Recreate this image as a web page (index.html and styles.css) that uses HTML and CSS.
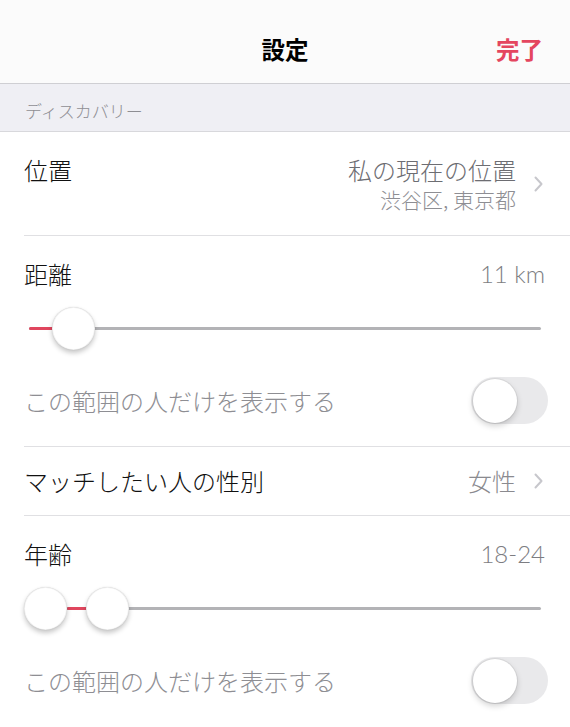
FILE: index.html
```html
<!doctype html>
<html>
<head>
<meta charset="utf-8">
<title>設定</title>
<link rel="stylesheet" href="styles.css">
</head>
<body>
	<header class="navbar">
		<span></span>
		<span class="nav-title">設定</span>
		<span class="nav-done">完了</span>
	</header>

	<div class="section-head">ディスカバリー</div>

	<ul class="list">
		<li class="row row-location">
			<span class="label">位置</span>
			<div class="value-block">
				<div class="value-main">私の現在の位置</div>
				<div class="value-sub">渋谷区, 東京都</div>
			</div>
			<svg class="chevron" width="9" height="16" viewBox="0 0 9 16"><polyline points="1.5,1.5 7.5,8 1.5,14.5" fill="none" stroke="#c7c7cc" stroke-width="2" stroke-linecap="round" stroke-linejoin="round"/></svg>
		</li>

		<li class="row row-range">
			<div class="range-top">
				<span class="label">距離</span>
				<span class="value num">11 km</span>
			</div>
			<div class="slider">
				<div class="track"></div>
				<div class="fill" style="left:0px;width:24px"></div>
				<div class="thumb" style="left:23px"></div>
			</div>
			<div class="switch-line">
				<span class="label-muted">この範囲の人だけを表示する</span>
				<span class="switch"><span class="knob"></span></span>
			</div>
		</li>

		<li class="row row-simple">
			<span class="label">マッチしたい人の性別</span>
			<span class="value">女性</span>
			<svg class="chevron" width="9" height="16" viewBox="0 0 9 16"><polyline points="1.5,1.5 7.5,8 1.5,14.5" fill="none" stroke="#c7c7cc" stroke-width="2" stroke-linecap="round" stroke-linejoin="round"/></svg>
		</li>

		<li class="row row-range">
			<div class="range-top">
				<span class="label">年齢</span>
				<span class="value num">18-24</span>
			</div>
			<div class="slider">
				<div class="track"></div>
				<div class="fill" style="left:38px;width:20px"></div>
				<div class="thumb" style="left:-5px"></div>
				<div class="thumb" style="left:57px"></div>
			</div>
			<div class="switch-line">
				<span class="label-muted">この範囲の人だけを表示する</span>
				<span class="switch"><span class="knob"></span></span>
			</div>
		</li>
	</ul>
</body>
</html>
```

FILE: styles.css
```css
body,*{
	padding:0px;
	margin:0px;
	box-sizing:border-box;
}

body{
	background:#fff;
	font-family:"Noto Sans CJK JP","Noto Sans",sans-serif;
	font-weight:300;
	color:#1c1c1e;
	overflow:hidden;
}

.navbar{
	height:84px;
	padding-top:15px;
	display:grid;
	grid-template-columns:1fr auto 1fr;
	align-items:center;
	background:#fbfbfb;
	border-bottom:1px solid #cfcfd3;
}

.nav-title{
	font-size:23.5px;
	font-weight:700;
	color:#000;
}

.nav-done{
	justify-self:end;
	padding-right:27px;
	font-size:23.5px;
	font-weight:700;
	color:#e4465f;
}

.section-head{
	height:48px;
	padding:16px 0 0 25px;
	line-height:22px;
	font-size:17px;
	color:#8e8e93;
	background:#efeff4;
	border-bottom:1px solid #d8d8dc;
}

.list{
	list-style-type:none;
}

.row{
	margin-left:24px;
	padding-right:22px;
	border-bottom:1px solid #e0e0e3;
}

.row:last-child{
	border-bottom:none;
}

.label{
	font-size:24px;
	line-height:28px;
	color:#111;
}

.value{
	font-size:24px;
	line-height:28px;
	color:#8a8a8f;
}

.value.num{
	font-family:Lato,"Noto Sans",sans-serif;
	font-weight:300;
	font-size:24px;
	color:#7d7d82;
}

.chevron{
	margin:0 5px 0 18px;
	flex:none;
}

.row-location{
	height:104px;
	display:flex;
	align-items:flex-start;
	padding-top:24px;
}

.row-location .chevron{
	align-self:center;
	margin-top:-24px;
}

.value-block{
	margin-left:auto;
	text-align:right;
}

.value-main{
	font-size:24px;
	line-height:28px;
	color:#6d6d72;
}

.value-sub{
	font-size:21px;
	line-height:30px;
	color:#8e8e93;
}

.row-simple{
	height:69px;
	display:flex;
	align-items:center;
}

.row-simple .value{
	margin-left:auto;
}

.row-range{
	padding-top:24px;
	padding-bottom:22px;
}

.range-top{
	display:flex;
	justify-content:space-between;
	padding-right:3px;
}

.slider{
	position:relative;
	height:44px;
	margin:18px 7px 0 5px;
}

.track{
	position:absolute;
	left:0;
	right:0;
	top:21px;
	height:3px;
	border-radius:2px;
	background:#b3b3b6;
}

.fill{
	position:absolute;
	top:21px;
	height:3px;
	border-radius:2px;
	background:#e0465e;
}

.thumb{
	position:absolute;
	top:1px;
	width:43px;
	height:43px;
	border-radius:50%;
	background:#fff;
	border:0.5px solid rgba(0,0,0,0.06);
	box-shadow:0 3px 5px rgba(0,0,0,0.22),0 0 1px rgba(0,0,0,0.2);
}

.switch-line{
	display:flex;
	align-items:center;
	justify-content:space-between;
	margin-top:27px;
}

.label-muted{
	font-size:24px;
	line-height:28px;
	color:#8e8e93;
}

.switch{
	width:77px;
	height:47px;
	border-radius:24px;
	background:#e9e9eb;
	padding:1.5px;
	display:flex;
}

.knob{
	width:44px;
	height:44px;
	border-radius:50%;
	background:#fff;
	box-shadow:0 3px 6px rgba(0,0,0,0.18),0 0 0 1px rgba(0,0,0,0.06);
}
```
